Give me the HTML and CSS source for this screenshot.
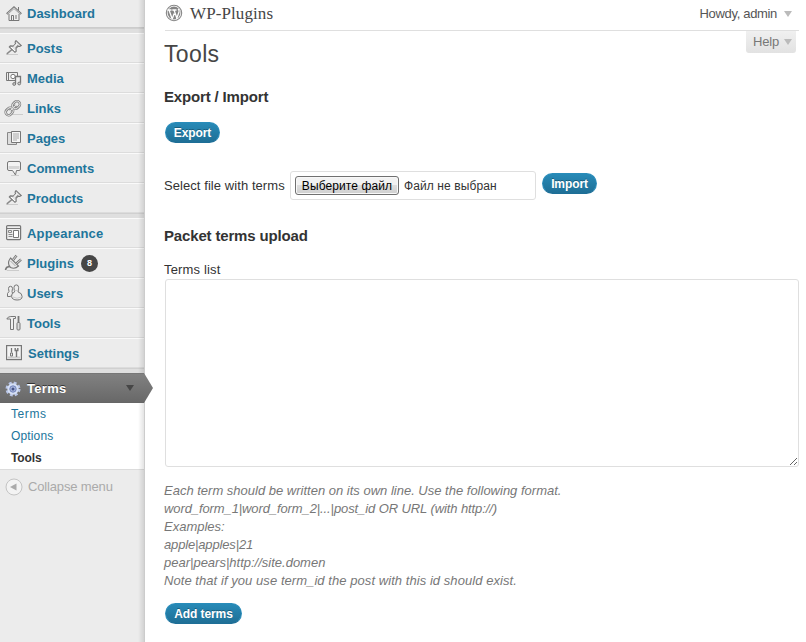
FILE: index.html
```html
<!DOCTYPE html>
<html lang="en">
<head>
<meta charset="utf-8">
<title>Tools</title>
<link rel="stylesheet" href="styles.css">
</head>
<body>
<svg class="defs" width="0" height="0">
  <defs>
    <symbol id="pin" viewBox="0 0 16 16"><path d="M0 14.500h12" stroke="#ccc"/><path d="M.8 13.800 6 9.500" stroke="#888" stroke-width="1.500"/><path d="M10 .6 15.300 5.500l-1.600 1-1.500-.4-2.200 2.200.2 3-1.200 1L3.300 7l1-1.100 3 .2 2.200-2.200-.4-1.700z" fill="#e2e2e2" stroke="#777" stroke-width="1.100"/><path d="m8 6.500 3-3M5 7l4 4" stroke="#fff"/><path d="m9.500 7.500 2.500-2.500" stroke="#999"/></symbol>
  </defs>
</svg>
<div class="page">
  <nav class="sidebar">
    <ul class="menu">
      <li class="item first"><svg class="icon" viewBox="0 0 16 16"><path d="M3 8v6.500h10V8" fill="#eee" stroke="#777"/><path d="M.8 8 8 1.500 15.200 8" fill="none" stroke="#777" stroke-width="2.200"/><path d="M1.500 7.700 8 1.900l6.500 5.800" fill="none" stroke="#eee" stroke-width=".8"/><path d="M12.500 1v3.500M5.500 14V9.500h2V14M10 9v4" fill="none" stroke="#777"/></svg><a>Dashboard</a></li>
      <li class="separator"></li>
      <li class="item"><svg class="icon"><use href="#pin"/></svg><a>Posts</a></li>
      <li class="item"><svg class="icon" viewBox="0 0 16 16"><path d="M.5 2.500h11v8H.5zM2.500 2v8" fill="#eee" stroke="#777"/><circle cx="7" cy="6.500" r="2.200" fill="#fff" stroke="#777"/><path d="M9.500 14v-7.500h5V13" fill="#eee" stroke="#777" stroke-width="1.300"/><circle cx="8.200" cy="14" r="1.400" fill="#ccc" stroke="#777"/><circle cx="13.200" cy="13.500" r="1.400" fill="#ccc" stroke="#777"/></svg><a>Media</a></li>
      <li class="item"><svg class="icon icon-left" viewBox="0 0 16 16"><path d="M6 14.500h12" stroke="#ccc"/><g transform="rotate(-44 8 8)" fill="none"><rect x="-1" y="5" width="8" height="6" rx="3" stroke="#777" stroke-width="2.500"/><rect x="8.500" y="5" width="8" height="6" rx="3" stroke="#777" stroke-width="2.500"/><path d="M4 8h8" stroke="#777" stroke-width="3"/><path d="M4 8h8" stroke="#eee"/><rect x="-1" y="5" width="8" height="6" rx="3" stroke="#ddd"/><rect x="8.500" y="5" width="8" height="6" rx="3" stroke="#ddd"/></g></svg><a>Links</a></li>
      <li class="item"><svg class="icon" viewBox="0 0 16 16"><path d="M1.500 2.500h9v12h-9z" fill="#ddd" stroke="#888"/><path d="M5.500 1.500h9v11h-9z" fill="#f5f5f5" stroke="#777"/><path d="M7 4h6M7 6h6M7 8h6M7 10h4" stroke="#aaa"/></svg><a>Pages</a></li>
      <li class="item"><svg class="icon" viewBox="0 0 16 16"><path d="M5 15.500h8" stroke="#ccc"/><path d="M3 1.500h10q1.500 0 1.500 1.500v6q0 1.500-1.500 1.500h-2.500L9.500 15 6.500 10.500H3Q1.500 10.500 1.500 9V3Q1.500 1.500 3 1.500z" fill="#f3f3f3" stroke="#777"/><path d="M2.500 6h11v3h-11z" fill="#d6d6d6"/></svg><a>Comments</a></li>
      <li class="item"><svg class="icon"><use href="#pin"/></svg><a>Products</a></li>
      <li class="separator"></li>
      <li class="item"><svg class="icon" viewBox="0 0 16 16"><rect x=".6" y=".6" width="14" height="14" rx="1" fill="#eee" stroke="#777" stroke-width="1.200"/><path d="M1 3.500h13" stroke="#777"/><path d="M2.500 5.500h3v2h-3zM2.500 9.500h4M2.500 11.500h4" fill="none" stroke="#888"/><path d="M7.500 5.500h5v7h-5z" fill="#fff" stroke="#777"/></svg><a class="s-appearance">Appearance</a></li>
      <li class="item"><svg class="icon icon-left" viewBox="0 0 16 16"><path d="M2 15.500h12" stroke="#ccc"/><path d="M.5 15q1-4 4-3" fill="none" stroke="#777" stroke-width="1.600"/><path d="m5.500 3 8 8q-3.500 3.500-8 1.500Q1.500 8.500 5.500 3z" fill="#e9e9e9" stroke="#777" stroke-width="1.100"/><path d="m8 5 3.500-4.500M11.500 8.500l4.500-4" stroke="#777" stroke-width="2.500"/><path d="m8 5 3.500-4.500M11.500 8.500l4.500-4" stroke="#e5e5e5" stroke-width=".9"/><path d="m5.500 6 5 5" stroke="#aaa"/></svg><a>Plugins</a><span class="badge">8</span></li>
      <li class="item"><svg class="icon" viewBox="0 0 16 16"><g fill="#eee" stroke="#777"><path d="M2.500 3.500a2 2.200 0 1 1 4 0L6 6.500l1 3.500-3 1.500H1.500v-3L3 6.500z"/><path d="M8 2.500a2.300 2.600 0 1 1 4.600 0c0 2-.5 3-.5 4.500q4 1 4 4.500t-5 3.500-5.500-3.500 3-4.500c0-1-.6-2.500-.6-4.500z"/></g><path d="M7 12q4 2.500 8 0M8.500 5.500h3.500" fill="none" stroke="#ccc"/></svg><a>Users</a></li>
      <li class="item"><svg class="icon" viewBox="0 0 16 16"><path d="M.8 4q1-2.500 4-2.500h4.700v2H7.500v11h-3V4z" fill="#eee" stroke="#777"/><path d="M12.500 1v6" stroke="#777" stroke-width="1.800"/><rect x="11" y="7.500" width="3" height="7.500" rx="1" fill="#ddd" stroke="#777"/></svg><a>Tools</a></li>
      <li class="item settings"><svg class="icon" viewBox="0 0 16 16"><rect x=".6" y=".6" width="14.800" height="14" fill="#f4f4f4" stroke="#777" stroke-width="1.200"/><path d="M2 12.500h12" stroke="#ccc" stroke-width="2"/><path d="M5.500 3v4.500" stroke="#777" stroke-width="1.300"/><path d="M4.500 8h2v3h-2z" fill="#eee" stroke="#777"/><path d="M9.200 3v2.500h2.600V3M10.500 5.500V12" fill="none" stroke="#777" stroke-width="1.400"/></svg><a>Settings</a></li>
      <li class="separator"></li>
      <li class="item current"><svg class="icon icon-gear" viewBox="0 0 16 16"><circle cx="8" cy="8" r="6" fill="none" stroke="#b9c6e8" stroke-width="3" stroke-dasharray="2.700 2.012"/><circle cx="8" cy="8" r="5.700" fill="#d5dff5"/><circle cx="8" cy="8" r="3.200" fill="#a9b7de" stroke="#7385bd"/><circle cx="8" cy="8" r="1.500" fill="#465487"/></svg><a>Terms</a><span class="toggle"></span></li>
    </ul>
    <ul class="submenu">
      <li class="s-terms">Terms</li>
      <li>Options</li>
      <li class="active">Tools</li>
    </ul>
    <div class="collapse"><svg class="collapse-icon" viewBox="0 0 18 18"><circle cx="9" cy="9" r="8" fill="#f3f3f3" stroke="#c4c4c4"/><path d="M11.500 5.500v7L5 9z" fill="#aaa"/></svg><span>Collapse menu</span></div>
  </nav>
  <main class="content">
    <header class="header">
      <svg class="logo" viewBox="0 0 18 18"><circle cx="9" cy="9" r="7.700" fill="#fff" stroke="#888" stroke-width="1.100"/><circle cx="9" cy="9" r="6.400" fill="#858585"/><path d="M2.500 6h4M7.300 6h4.200M4 6l3.200 9M9 6l3.200 9M7.200 15l2-5.500M11.500 15 14 8q.5-2-1-3" fill="none" stroke="#fff" stroke-width="1.300"/></svg>
      <span class="site">WP-Plugins</span>
      <span class="user">Howdy, admin</span><span class="arrow"></span>
    </header>
    <div class="top">
      <h1>Tools</h1>
      <div class="help">Help<span class="arrow"></span></div>
    </div>
    <h2>Export / Import</h2>
    <button class="button export">Export</button>
    <div class="file-row">
      <label>Select file with terms</label>
      <div class="file"><button class="choose">Выберите файл</button><span>Файл не выбран</span></div>
      <button class="button import">Import</button>
    </div>
    <h2>Packet terms upload</h2>
    <label class="list-label" for="terms">Terms list</label>
    <textarea id="terms"></textarea>
    <p class="hint">Each term should be written on its own line. Use the following format.<br><span class="format">word_form_1|word_form_2|...|post_id OR URL (with http://)</span><br>Examples:<br><span class="sample">apple|apples|21</span><br>pear|pears|http://site.domen<br><span class="note">Note that if you use term_id the post with this id should exist.</span></p>
    <button class="button add">Add terms</button>
  </main>
</div>
</body>
</html>
```
FILE: styles.css
```css
* { box-sizing: border-box; }
body { margin: 0; background: #fff; color: #333; font: 13px/18px "Liberation Sans", Arial, sans-serif; }
ul { list-style: none; margin: 0; padding: 0; }
.defs { display: block; height: 0; }
.page { display: flex; height: 642px; overflow: hidden; }
.sidebar { position: relative; width: 145px; flex: none; background: #ececec; border-right: 1px solid #ccc; }
.sidebar::after { content: ""; position: absolute; top: 0; right: 0; bottom: 0; width: 6px; background: linear-gradient(to right, rgba(0,0,0,0), rgba(0,0,0,.11)); }
.item { display: flex; align-items: center; height: 30px; padding-left: 6px; border-top: 1px solid #fafafa; border-bottom: 1px solid #dcdcdc; color: #21759b; font-weight: bold; }
.item.first { height: 28px; border-top: 0; border-bottom-color: #ccc; }
.item a { padding-top: 1px; }
.item.first a { padding: 0; }
.s-appearance { letter-spacing: .2px; }
.icon { width: 16px; height: 16px; margin-right: 5px; flex: none; overflow: visible; }
.icon-left { margin-left: -1px; margin-right: 6px; }
.settings .icon { margin-right: 6px; }
.separator { height: 5px; background: #dfdfdf; border-top: 1px solid #d0d0d0; }
.badge { width: 17px; height: 17px; margin: 1px 0 0 7px; border-radius: 9px; background: #464646; color: #fff; font-size: 9px; line-height: 17px; text-align: center; }
.item.current { position: relative; z-index: 1; color: #fff; border-color: #777 transparent #666; background: linear-gradient(#818181, #686868); text-shadow: 0 -1px 0 #333; letter-spacing: .3px; }
.current::after { content: ""; position: absolute; left: 144px; top: -1px; width: 9px; height: 30px; background: linear-gradient(#818181, #686868); clip-path: polygon(0 0, 100% 50%, 0 100%); }
.icon-gear { margin-top: 2px; margin-left: -1px; margin-right: 6px; }
.toggle { margin-left: auto; margin-right: 10px; border: 4px solid transparent; border-top: 6px solid #464646; border-bottom: 0; }
.submenu { height: 67px; background: #fff; border-bottom: 1px solid #dcdcdc; color: #21759b; font-size: 12px; padding-left: 11px; }
.submenu li { height: 22px; line-height: 22px; letter-spacing: .15px; }
.submenu .s-terms { letter-spacing: .6px; }
.submenu .active { color: #333; font-weight: bold; letter-spacing: -.1px; }
.collapse { display: flex; align-items: center; height: 34px; padding-left: 5px; color: #aaa; letter-spacing: -.15px; }
.collapse-icon { width: 18px; height: 18px; margin-right: 5px; }
.content { flex: 1; padding: 0 7px 0 19px; display: flex; flex-direction: column; align-items: flex-start; }
.header { display: flex; align-items: center; align-self: stretch; height: 31px; padding: 0 0 4px 1px; margin-left: 1px; border-bottom: 1px solid #dfdfdf; }
.logo { width: 18px; height: 18px; margin-left: -1px; }
.site { margin-left: 7px; padding-top: 1px; font: 17px/20px "Liberation Serif", serif; letter-spacing: .1px; color: #464646; }
.user { margin-left: auto; padding-top: 1px; color: #555; letter-spacing: -.33px; }
.arrow { margin: 1px 7px 0; border: 4px solid transparent; border-top: 6px solid #bbb; border-bottom: 0; }
.top { display: flex; justify-content: space-between; align-self: stretch; height: 57px; }
h1 { margin: 9px 0 0; font-size: 23px; line-height: 29px; font-weight: normal; letter-spacing: .35px; color: #464646; }
.help { display: flex; align-items: center; width: 50px; height: 22px; margin-right: 3px; padding: 0 0 1px 7px; border-radius: 0 0 3px 3px; color: #777; background: linear-gradient(#f0f0f0, #e2e2e2); letter-spacing: -.2px; }
.help .arrow { margin: 0 0 0 5px; }
h2 { margin: 0; height: 18px; font-size: 15px; line-height: 18px; letter-spacing: -.16px; color: #333; }
.button { height: 21px; padding: 0; border: 1px solid #298cba; border-bottom-color: #1d6e97; border-radius: 11px; background: linear-gradient(#278ab7, #1f6f96); color: #fff; font: bold 12px/18px "Liberation Sans", Arial, sans-serif; letter-spacing: -.1px; text-shadow: 0 -1px 0 rgba(0,0,0,.3); flex: none; }
.export { width: 55px; margin: 16px 0 0 1px; }
.import { width: 55px; margin: 2px 0 0 6px; }
.add { width: 77px; margin: 13px 0 0 1px; }
.file-row { display: flex; align-items: flex-start; height: 29px; margin: 28px 0 27px; }
.file-row label { width: 126px; padding-top: 6px; white-space: nowrap; letter-spacing: .07px; }
.file { display: flex; align-items: center; width: 246px; height: 29px; padding-left: 4px; border: 1px solid #dfdfdf; border-radius: 3px; font-size: 12px; letter-spacing: .1px; }
.choose { width: 104px; height: 19px; padding: 1px 0 0; border: 1px solid #707070; border-radius: 3px; box-shadow: inset 0 0 0 1px #f8f8f8; background: linear-gradient(#f2f2f2 0 48%, #ddd 50%, #cfcfcf); color: #000; font: 12px/15px "Liberation Sans", Arial, sans-serif; letter-spacing: .1px; margin-right: 5px; white-space: nowrap; }
.list-label { margin-top: 16px; letter-spacing: .15px; }
textarea { display: block; width: 634px; height: 188px; margin: 0 0 0 1px; border: 1px solid #dfdfdf; border-radius: 3px; flex: none; background: #fff; }
.hint { margin: 15px 0 0; color: #777; font-style: italic; white-space: nowrap; }
.format { letter-spacing: -.1px; }
.sample { letter-spacing: -.15px; }
.note { letter-spacing: .06px; }
```
